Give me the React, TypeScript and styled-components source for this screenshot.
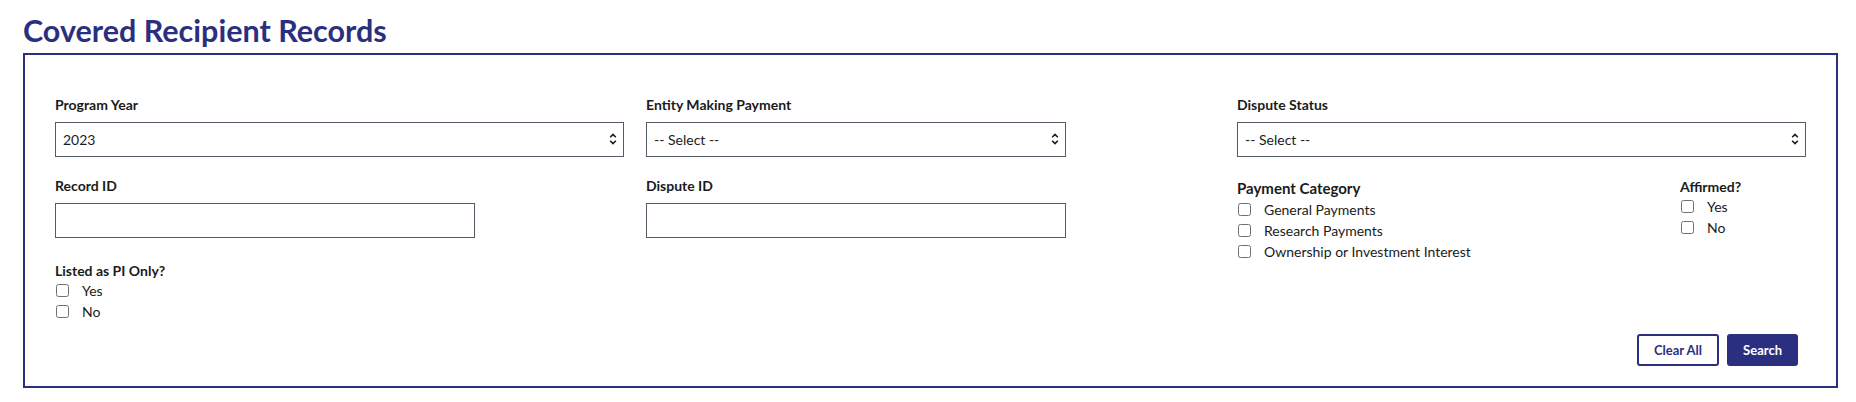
import React from "react";
import styled, { createGlobalStyle } from "styled-components";

const navy = "#2b2f7f";
const ink = "#1b1b1b";

const GlobalStyle = createGlobalStyle`
  body {
    margin: 0;
    background: #ffffff;
    font-family: Lato, "Noto Sans", sans-serif;
    color: ${ink};
  }
`;

const Page = styled.main`
  padding: 12px 18px 0 23px;
`;

const Title = styled.h1`
  margin: 0 0 5px 0;
  font-family: Lato, sans-serif;
  font-size: 30.5px;
  line-height: 36px;
  font-weight: 700;
  color: ${navy};
`;

const SearchBox = styled.section`
  border: 2px solid ${navy};
  padding: 40px 30px 20px 30px;
`;

const FieldsGrid = styled.div`
  display: grid;
  grid-template-columns: repeat(3, 1fr);
  column-gap: 22px;
  align-items: start;
`;

const Column = styled.div`
  display: flex;
  flex-direction: column;
`;

const Field = styled.div<{ $gap?: number }>`
  display: flex;
  flex-direction: column;
  margin-bottom: ${(p) => p.$gap ?? 19}px;
`;

const Label = styled.label<{ $size?: number }>`
  display: block;
  font-size: ${(p) => p.$size ?? 14}px;
  line-height: 20px;
  font-weight: 700;
  color: ${ink};
  margin-bottom: 7px;
`;

const SelectWrap = styled.div<{ $narrow?: boolean }>`
  position: relative;
  width: ${(p) => (p.$narrow ? "420px" : "100%")};
`;

const Select = styled.select`
  appearance: none;
  width: 100%;
  height: 35px;
  box-sizing: border-box;
  border: 1px solid #565c65;
  border-radius: 0;
  background: #ffffff;
  padding: 0 28px 0 7px;
  font-family: Lato, sans-serif;
  font-size: 14px;
  color: ${ink};
`;

const Chevrons = styled.svg`
  position: absolute;
  right: 7px;
  top: 10px;
  pointer-events: none;
`;

const TextInput = styled.input`
  width: 420px;
  height: 35px;
  box-sizing: border-box;
  border: 1px solid #565c65;
  border-radius: 0;
  padding: 0 7px;
  font-family: Lato, sans-serif;
  font-size: 14px;
`;

const SplitGroups = styled.div`
  display: grid;
  grid-template-columns: 443px 1fr;
  margin-top: 1px;
`;

const Fieldset = styled.fieldset<{ $offset?: number }>`
  border: 0;
  margin: 0;
  padding: 0;
  min-width: 0;
  display: flex;
  flex-direction: column;
  margin-top: ${(p) => p.$offset ?? 0}px;
`;

const Legend = styled.div<{ $size?: number; $space?: number }>`
  font-size: ${(p) => p.$size ?? 14}px;
  line-height: 20px;
  font-weight: 700;
  color: ${ink};
  margin-bottom: ${(p) => p.$space ?? -1}px;
`;

const CheckRow = styled.label`
  display: flex;
  align-items: center;
  height: 21px;
  font-size: 14px;
  color: ${ink};
`;

const Box = styled.input.attrs({ type: "checkbox" })`
  appearance: none;
  width: 13px;
  height: 13px;
  margin: 0 13px 0 1px;
  border: 1px solid #707070;
  border-radius: 2.5px;
  background: #ffffff;
`;

const Actions = styled.div`
  display: flex;
  justify-content: flex-end;
  gap: 8px;
  margin: 12px 8px 0 0;
`;

const Button = styled.button<{ $primary?: boolean }>`
  height: 32px;
  box-sizing: border-box;
  padding: 0 ${(p) => (p.$primary ? 14 : 15)}px;
  border: 2px solid ${navy};
  border-radius: 3px;
  background: ${(p) => (p.$primary ? navy : "#ffffff")};
  color: ${(p) => (p.$primary ? "#ffffff" : navy)};
  font-family: Lato, sans-serif;
  font-size: 13px;
  font-weight: 700;
`;

function UnfoldIcon() {
  return (
    <Chevrons width="8" height="14" viewBox="0 0 8 14" fill="none">
      <path d="M1.2 5.2 L4 2.4 L6.8 5.2" stroke={ink} strokeWidth="1.6" />
      <path d="M1.2 8.8 L4 11.6 L6.8 8.8" stroke={ink} strokeWidth="1.6" />
    </Chevrons>
  );
}

function SelectField(props: {
  label: string;
  value: string;
  narrow?: boolean;
}) {
  return (
    <Field>
      <Label>{props.label}</Label>
      <SelectWrap $narrow={props.narrow}>
        <Select defaultValue={props.value}>
          <option>{props.value}</option>
        </Select>
        <UnfoldIcon />
      </SelectWrap>
    </Field>
  );
}

function Checks(props: { items: string[] }) {
  return (
    <>
      {props.items.map((item) => (
        <CheckRow key={item}>
          <Box />
          {item}
        </CheckRow>
      ))}
    </>
  );
}

export default function App() {
  return (
    <Page>
      <GlobalStyle />
      <Title>Covered Recipient Records</Title>
      <SearchBox>
        <FieldsGrid>
          <Column>
            <SelectField label="Program Year" value="2023" />
            <Field $gap={23}>
              <Label>Record ID</Label>
              <TextInput />
            </Field>
            <Fieldset>
              <Legend>Listed as PI Only?</Legend>
              <Checks items={["Yes", "No"]} />
            </Fieldset>
          </Column>
          <Column>
            <SelectField label="Entity Making Payment" value="-- Select --" narrow />
            <Field>
              <Label>Dispute ID</Label>
              <TextInput />
            </Field>
          </Column>
          <Column>
            <SelectField label="Dispute Status" value="-- Select --" />
            <SplitGroups>
              <Fieldset $offset={1}>
                <Legend $size={15} $space={1}>
                  Payment Category
                </Legend>
                <Checks
                  items={[
                    "General Payments",
                    "Research Payments",
                    "Ownership or Investment Interest",
                  ]}
                />
              </Fieldset>
              <Fieldset>
                <Legend $space={-1}>Affirmed?</Legend>
                <Checks items={["Yes", "No"]} />
              </Fieldset>
            </SplitGroups>
          </Column>
        </FieldsGrid>
        <Actions>
          <Button type="button">Clear All</Button>
          <Button type="button" $primary>
            Search
          </Button>
        </Actions>
      </SearchBox>
    </Page>
  );
}
